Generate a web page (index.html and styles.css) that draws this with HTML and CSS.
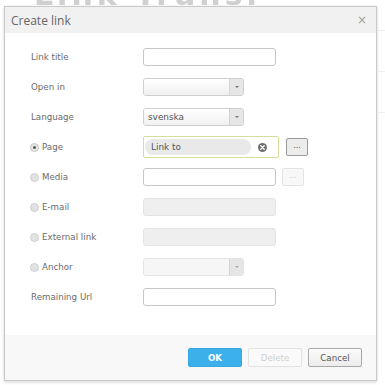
FILE: index.html
```html
<!DOCTYPE html>
<html>
<head>
<meta charset="utf-8">
<link rel="stylesheet" href="styles.css">
</head>
<body>
<div class="page">
  <div class="page-head"><span class="page-title">Link Transl</span></div>
  <div class="side-lines">
    <div class="side-line"></div>
    <div class="side-line"></div>
    <div class="side-line"></div>
  </div>
</div>
<div class="dialog">
  <div class="dlg-header">
    <span class="dlg-title">Create link</span>
    <span class="dlg-close">×</span>
  </div>
  <div class="dlg-body">
    <div class="row">
      <label class="lbl">Link title</label>
      <div class="ctl"><div class="input"></div></div>
    </div>
    <div class="row">
      <label class="lbl">Open in</label>
      <div class="ctl"><div class="select"><span class="sel-text"></span><span class="sel-arrow"><span class="caret"></span></span></div></div>
    </div>
    <div class="row">
      <label class="lbl">Language</label>
      <div class="ctl"><div class="select"><span class="sel-text">svenska</span><span class="sel-arrow"><span class="caret"></span></span></div></div>
    </div>
    <div class="row">
      <label class="lbl"><span class="radio checked"></span>Page</label>
      <div class="ctl">
        <div class="picker">
          <span class="pill">Link to</span>
          <span class="clear"><svg width="9" height="9" viewBox="0 0 9 9"><circle cx="4.5" cy="4.5" r="4.5" fill="#6f6f6f"/><path d="M2.8 2.8 L6.2 6.2 M6.2 2.8 L2.8 6.2" stroke="#fff" stroke-width="1.3" stroke-linecap="round"/></svg></span>
        </div>
        <span class="dots">...</span>
      </div>
    </div>
    <div class="row">
      <label class="lbl"><span class="radio"></span>Media</label>
      <div class="ctl"><div class="input"></div><span class="dots disabled">...</span></div>
    </div>
    <div class="row">
      <label class="lbl"><span class="radio"></span>E-mail</label>
      <div class="ctl"><div class="input disabled"></div></div>
    </div>
    <div class="row">
      <label class="lbl"><span class="radio"></span>External link</label>
      <div class="ctl"><div class="input disabled"></div></div>
    </div>
    <div class="row">
      <label class="lbl"><span class="radio"></span>Anchor</label>
      <div class="ctl"><div class="select disabled"><span class="sel-text"></span><span class="sel-arrow"><span class="caret"></span></span></div></div>
    </div>
    <div class="row">
      <label class="lbl">Remaining Url</label>
      <div class="ctl"><div class="input"></div></div>
    </div>
  </div>
  <div class="dlg-footer">
    <button class="btn btn-ok">OK</button>
    <button class="btn btn-delete">Delete</button>
    <button class="btn btn-cancel">Cancel</button>
  </div>
</div>
</body>
</html>
```

FILE: styles.css
```css
html, body {
  margin: 0;
  padding: 0;
  background: #fff;
  width: 385px;
  height: 385px;
  overflow: hidden;
}
.page {
  position: relative;
  height: 385px;
}
.page-head {
  height: 6px;
  overflow: hidden;
  padding-left: 34px;
}
.page-title {
  display: block;
  margin-top: -20px;
  font-family: "DejaVu Sans", sans-serif;
  font-size: 30px;
  font-weight: bold;
  line-height: 30px;
  color: #d0d0d0;
  letter-spacing: 4px;
  filter: blur(0.6px);
}
.side-lines {
  position: absolute;
  left: 378px;
  top: 30px;
  width: 10px;
}
.side-line {
  height: 1px;
  background: #eef0f4;
  margin-bottom: 40px;
}
.dialog {
  position: absolute;
  left: 4px;
  top: 6px;
  width: 371px;
  height: 373px;
  border: 1px solid #c9c9c9;
  box-shadow: 0 1px 3px rgba(0,0,0,0.18);
  background: #fff;
  display: flex;
  flex-direction: column;
  font-family: "DejaVu Sans", Verdana, sans-serif;
  font-size: 8.7px;
  color: #666;
}
.dlg-header {
  height: 26px;
  background: #f1f1f1;
  display: flex;
  align-items: center;
  justify-content: space-between;
  padding: 0 9px 0 6px;
}
.dlg-title {
  font-family: "Open Sans", sans-serif;
  font-size: 12px;
  color: #666;
}
.dlg-close {
  font-family: "DejaVu Sans", sans-serif;
  font-size: 12px;
  color: #a0a0a0;
  margin-top: -1px;
}
.dlg-body {
  flex: 1;
  padding: 9px 0 0 26px;
}
.row {
  display: flex;
  align-items: center;
  height: 30px;
}
.lbl {
  width: 112px;
  display: flex;
  align-items: center;
  color: #6a6a6a;
}
.radio {
  width: 7px;
  height: 7px;
  border-radius: 50%;
  background: #e2e2e2;
  border: 1px solid #d0d0d0;
  margin: 0 3px 0 -1px;
  position: relative;
}
.radio.checked {
  background: #e8e8e8;
  border-color: #c4c4c4;
}
.radio.checked::after {
  content: "";
  position: absolute;
  left: 2px;
  top: 2px;
  width: 3px;
  height: 3px;
  border-radius: 50%;
  background: #555;
}
.ctl {
  display: flex;
  align-items: center;
  gap: 6px;
}
.input {
  width: 131px;
  height: 16px;
  border: 1px solid #c6c6c6;
  border-radius: 3px;
  background: #fff;
}
.input.disabled {
  background: #efefef;
  border-color: #e4e4e4;
}
.select {
  width: 99px;
  height: 16px;
  border: 1px solid #cfcfcf;
  border-radius: 3px;
  background: #f6f6f6;
  display: flex;
  overflow: hidden;
}
.select.disabled {
  background: #f4f4f4;
  border-color: #e4e4e4;
}
.sel-text {
  flex: 1;
  padding-left: 4px;
  line-height: 16px;
  font-size: 8.9px;
  color: #555;
  background: linear-gradient(#fff, #f0f0f0);
}
.select.disabled .sel-text {
  background: #f6f6f6;
}
.sel-arrow {
  width: 13px;
  border-left: 1px solid #d4d4d4;
  background: #e6e6e6;
  display: flex;
  align-items: center;
  justify-content: center;
}
.caret {
  width: 0;
  height: 0;
  border-left: 2px solid transparent;
  border-right: 2px solid transparent;
  border-top: 2px solid #777;
}
.select.disabled .caret {
  border-top-color: #aaa;
}
.picker {
  width: 131px;
  height: 20px;
  border: 1px solid #d3dd9c;
  border-radius: 2px;
  background: #fff;
  display: flex;
  align-items: center;
  padding: 0 0 0 3px;
  box-sizing: content-box;
}
.pill {
  width: 100px;
  height: 16px;
  border-radius: 8px;
  background: #e9e9e9;
  line-height: 16px;
  padding-left: 6px;
  font-size: 8.9px;
  color: #555;
  margin-left: -2px;
}
.clear {
  display: flex;
  margin-left: 7px;
}
.dots {
  width: 20px;
  height: 16px;
  border: 1px solid #9a9a9a;
  border-radius: 2px;
  background: #ececec;
  text-align: center;
  line-height: 14px;
  font-size: 8px;
  color: #555;
}
.dots.disabled {
  border-color: #e4e4e4;
  background: #f8f8f8;
  color: #cfcfcf;
}
.ctl .picker + .dots {
  margin-left: 1px;
}
.dlg-footer {
  height: 45px;
  background: #f8f8f8;
  display: flex;
  align-items: center;
  justify-content: flex-end;
  gap: 6px;
  padding: 0 14px 0 0;
}
.btn {
  width: 54px;
  height: 19px;
  border-radius: 2px;
  font-family: "DejaVu Sans", Verdana, sans-serif;
  font-size: 8.7px;
  padding: 0;
  margin: 0;
}
.btn-ok {
  background: #3cb0ea;
  border: 1px solid #35a6de;
  color: #fff;
  font-weight: bold;
}
.btn-delete {
  background: #fafafa;
  border: 1px solid #e2e2e2;
  color: #cfcfcf;
}
.btn-cancel {
  background: linear-gradient(#fbfbfb, #ececec);
  border: 1px solid #a9a9a9;
  color: #555;
}
```
